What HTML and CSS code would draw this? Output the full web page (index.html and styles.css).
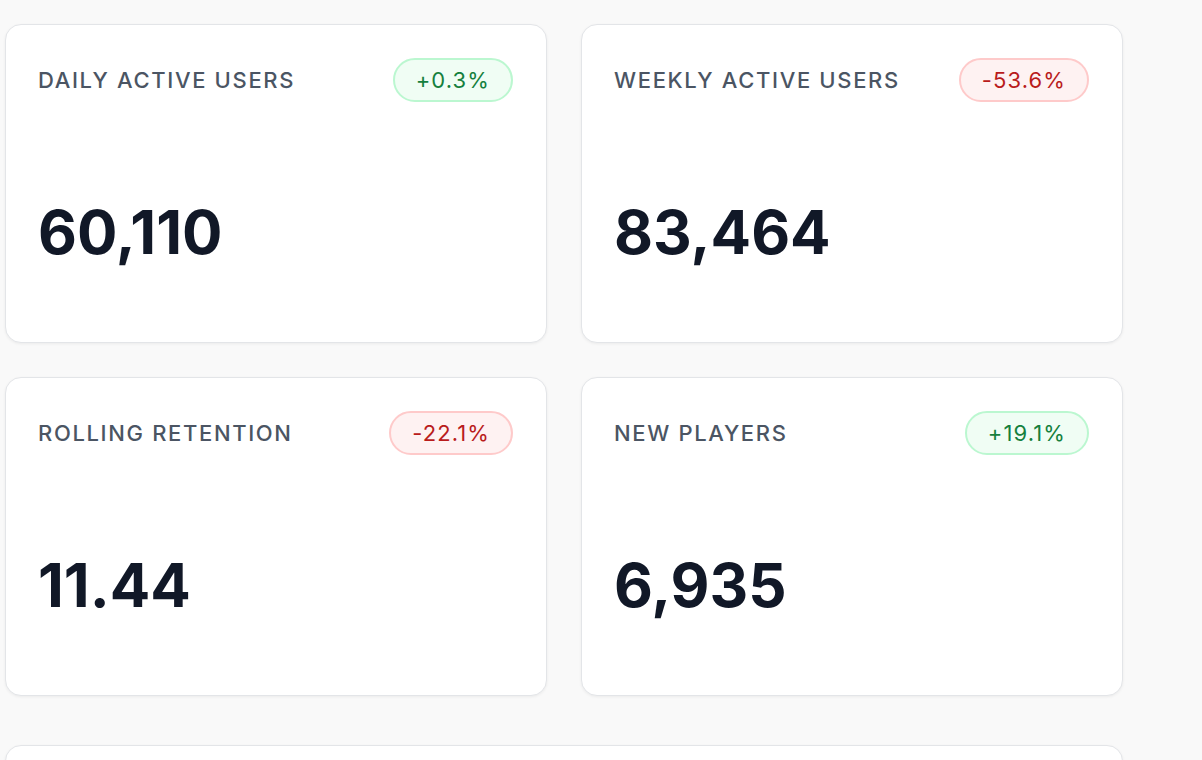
FILE: index.html
```html
<!DOCTYPE html>
<html lang="en">
<head>
<meta charset="utf-8">
<title>Player metrics</title>
<link rel="stylesheet" href="styles.css">
</head>
<body>
<main class="page">
  <section class="grid">
    <article class="card">
      <header class="card-head">
        <span class="label">DAILY ACTIVE USERS</span>
        <span class="badge up">+0.3%</span>
      </header>
      <div class="value">60,110</div>
    </article>
    <article class="card">
      <header class="card-head">
        <span class="label">WEEKLY ACTIVE USERS</span>
        <span class="badge down">-53.6%</span>
      </header>
      <div class="value">83,464</div>
    </article>
    <article class="card">
      <header class="card-head">
        <span class="label">ROLLING RETENTION</span>
        <span class="badge down">-22.1%</span>
      </header>
      <div class="value">11.44</div>
    </article>
    <article class="card">
      <header class="card-head">
        <span class="label">NEW PLAYERS</span>
        <span class="badge up">+19.1%</span>
      </header>
      <div class="value">6,935</div>
    </article>
  </section>
  <section class="panel"></section>
</main>
</body>
</html>
```
FILE: styles.css
```css
html, body {
  margin: 0;
  padding: 0;
  background: #f9f9f9;
  font-family: Inter, "Noto Sans", "Liberation Sans", sans-serif;
}

.page {
  padding: 24px 0 0 5px;
  width: 1118px;
}

.grid {
  display: grid;
  grid-template-columns: 542px 542px;
  column-gap: 34px;
  row-gap: 34px;
}

.card {
  background: #ffffff;
  border: 1px solid #e3e5e8;
  border-radius: 16px;
  box-shadow: 0 1px 3px rgba(0, 0, 0, 0.06);
  padding: 33px 33px 80px 32px;
  display: flex;
  flex-direction: column;
}

.card-head {
  display: flex;
  justify-content: space-between;
  align-items: center;
  height: 44px;
}

.label {
  font-size: 22px;
  font-weight: 500;
  letter-spacing: 0.075em;
  color: #4b5563;
}

.badge {
  box-sizing: border-box;
  height: 44px;
  line-height: 40px;
  padding: 0 21px;
  border-radius: 22px;
  border: 2px solid;
  font-size: 22px;
  font-weight: 400;
  letter-spacing: 0.05em;
}

.badge.up {
  background: #f0fdf4;
  border-color: #bbf7d0;
  color: #15803d;
}

.badge.down {
  background: #fef2f2;
  border-color: #fecaca;
  color: #b91c1c;
}

.value {
  margin-top: 100px;
  font-size: 60px;
  line-height: 60px;
  font-weight: 700;
  color: #111827;
}

.panel {
  margin-top: 49px;
  height: 300px;
  background: #ffffff;
  border: 1px solid #e3e5e8;
  border-radius: 16px;
  box-shadow: 0 1px 3px rgba(0, 0, 0, 0.06);
}
```
